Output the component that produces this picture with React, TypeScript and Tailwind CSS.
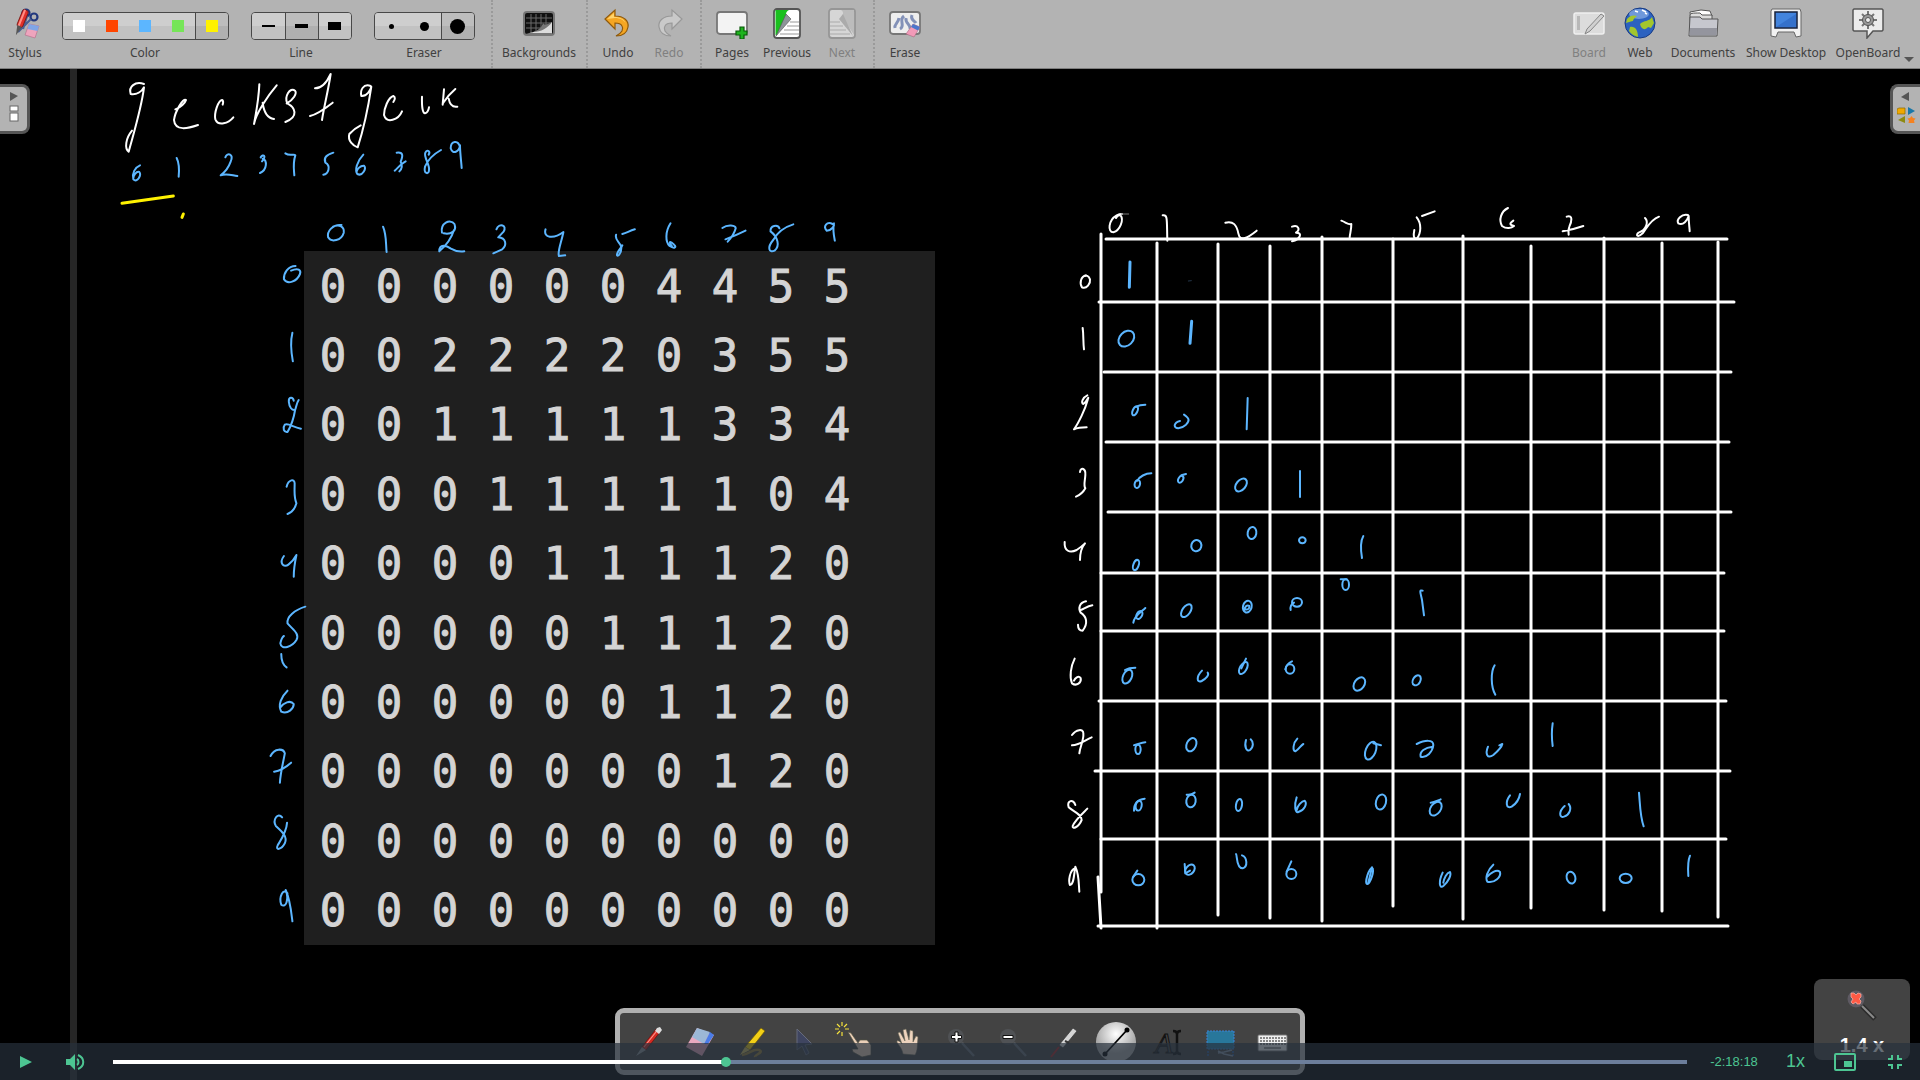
import React from "react";

const BLUE = "#5cb6ff";

type Ring = [number, number, number, number, number?];

function Ink({ x, y, w, h, vw, vh, color, width = 2, d = [], rings = [] }: {
  x: number; y: number; w: number; h: number; vw: number; vh: number;
  color: string; width?: number; d?: string[]; rings?: Ring[];
}) {
  return (
    <svg x={x} y={y} width={w} height={h} viewBox={`0 0 ${vw} ${vh}`} preserveAspectRatio="none"
      overflow="visible" fill="none" stroke={color} strokeWidth={width} strokeLinecap="round" strokeLinejoin="round">
      {d.map((p, i) => <path key={i} d={p} vectorEffect="non-scaling-stroke" />)}
      {rings.map(([cx, cy, rx, ry, r = 0], i) => (
        <ellipse key={i} cx={cx} cy={cy} rx={rx} ry={ry} transform={`rotate(${r} ${cx} ${cy})`} vectorEffect="non-scaling-stroke" />
      ))}
    </svg>
  );
}

const gridLines = [
  [1101, 234, 1101, 892], [1098, 877, 1101, 928], [1157, 243, 1157, 928], [1218, 244, 1218, 915],
  [1270, 246, 1270, 918], [1322, 237, 1322, 921], [1393, 239, 1393, 906], [1463, 236, 1463, 919],
  [1531, 246, 1531, 908], [1604, 238, 1604, 910], [1662, 243, 1662, 911], [1718, 242, 1718, 917],
  [1106, 239, 1727, 239], [1099, 302, 1734, 302], [1104, 372, 1731, 372], [1106, 442, 1729, 442],
  [1108, 512, 1731, 512], [1101, 573, 1724, 573], [1101, 631, 1724, 631], [1099, 701, 1726, 701],
  [1095, 771, 1730, 771], [1101, 839, 1726, 839], [1098, 926, 1728, 926],
];

function Drawing() {
  const title = { x: 60, y: 70, w: 440, h: 190, vw: 1320, vh: 570 };
  const tl = { x: 250, y: 210, w: 700, h: 380, vw: 1568, vh: 1140, color: BLUE };
  const bl = { ...tl, y: 580 };
  const gA = { x: 1050, y: 200, w: 380, h: 370, vw: 1140, vh: 1110 };
  const gB = { x: 1400, y: 200, w: 360, h: 370, vw: 1080, vh: 1110 };
  const gC = { x: 1050, y: 560, w: 380, h: 380, vw: 1140, vh: 1140 };
  const gD = { x: 1400, y: 560, w: 360, h: 380, vw: 1080, vh: 1140 };
  return (
    <svg className="absolute left-0 top-0 h-[1011px] w-[1920px]" viewBox="0 69 1920 1011" role="img" aria-label="Whiteboard handwriting">
      <g stroke="#fff" strokeWidth="3" strokeLinecap="round">
        {gridLines.map(([x1, y1, x2, y2], i) => <line key={i} x1={x1} y1={y1} x2={x2} y2={y2} />)}
      </g>
      <Ink {...title} color="#fff" d={[
        "M252 42 C225 33 205 50 212 72 C230 75 245 65 252 52 C245 110 228 165 206 245 C193 235 197 205 216 182",
        "M346 118 C362 112 376 98 378 90 C370 82 345 125 342 150 C345 185 385 175 414 165",
        "M488 104 C490 98 490 92 486 90 C474 92 462 130 466 148 C475 170 505 160 520 142",
        "M598 43 C596 90 588 130 582 162 C588 130 625 75 650 46 M608 98 C612 130 625 145 642 147",
        "M680 100 C700 90 712 70 705 62 C690 50 672 80 682 100 C705 112 718 140 676 156",
        "M765 55 C785 55 800 38 812 12 C805 60 792 110 786 150 M750 138 C775 132 800 112 818 98",
        "M932 48 C910 40 900 60 904 78 C920 80 932 60 934 50 C925 110 910 180 893 232 C880 228 862 212 868 192 C880 178 890 172 902 166",
        "M1000 96 C1006 88 1006 80 1000 78 C985 82 972 115 972 135 C980 162 1015 150 1026 124",
        "M1086 80 C1085 110 1088 130 1095 130 C1103 128 1106 118 1107 112",
        "M1152 58 L1148 104 M1186 57 C1165 75 1154 92 1150 98 M1166 86 C1170 108 1180 112 1192 110",
      ]} />
      <Ink {...title} color={BLUE} d={[
        "M240 286 C225 292 215 310 220 328 C232 340 245 315 238 306 C228 303 220 318 220 325",
        "M350 264 C358 280 358 300 356 320",
        "M496 262 C502 246 522 252 512 275 C505 295 490 310 482 316 C500 310 515 316 532 318",
        "M602 262 C610 250 620 258 606 274 M608 266 C622 270 622 300 600 309",
        "M676 250 C690 260 702 250 706 256 C698 280 702 300 703 316",
        "M820 248 C800 255 790 262 796 278 C814 288 805 312 790 314",
        "M910 254 C890 275 884 300 892 312 C908 320 920 295 912 287 C900 286 892 298 890 304",
        "M1010 248 C1032 245 1028 260 1022 275 C1030 290 1022 300 1018 304 M1004 302 C1015 292 1025 280 1037 274",
        "M1143 240 C1125 250 1105 265 1095 290 C1090 312 1107 315 1107 300 C1110 285 1090 260 1096 248 C1102 236 1112 245 1106 254",
        "M1200 232 C1195 208 1172 212 1172 235 C1178 255 1198 245 1200 226 C1200 250 1204 275 1205 294",
      ]} />
      <Ink {...title} color="#fff200" width={3} d={["M186 400 L340 378", "M370 432 L366 442"]} />

      <Ink {...tl} d={[
        "M205 45 C185 42 172 65 175 82 C182 98 205 92 210 68 C212 50 200 42 186 50",
        "M298 50 C306 75 304 100 306 126",
        "M430 68 C426 40 448 25 458 42 C464 64 450 74 434 70 M457 60 C450 90 438 108 424 124 C424 100 440 106 450 116 C460 124 470 126 480 124",
        "M552 58 C558 38 577 45 568 65 L556 82 C574 84 576 105 565 118 L545 130",
        "M662 58 C656 84 680 88 702 66 C698 95 688 125 692 138 L706 136",
        "M862 58 C850 62 845 68 834 72 M820 74 C816 92 830 96 832 112 C832 132 822 144 822 134 C822 125 832 112 834 106",
        "M942 40 C930 65 930 95 940 108 C950 117 957 112 950 104 C942 93 936 92 945 108",
        "M1058 54 C1070 42 1088 45 1088 55 C1085 70 1075 88 1070 95 M1065 88 C1085 78 1098 70 1110 62",
        "M1217 43 C1195 52 1180 70 1172 90 C1158 112 1162 130 1175 122 C1188 108 1182 80 1166 64 C1165 46 1182 42 1186 55",
        "M1305 42 C1292 33 1283 50 1292 62 C1302 62 1310 48 1308 40 C1305 60 1308 78 1310 92",
        "M102 168 C85 168 75 190 76 208 C84 225 105 215 112 192 C115 180 108 172 92 182",
        "M95 368 C90 395 92 425 96 454",
        "M98 572 C96 560 86 560 87 576 C88 592 94 602 101 600 C104 590 104 580 109 570 M101 600 C98 625 92 648 84 666 C76 668 72 655 78 644 C86 638 96 652 114 656",
        "M82 830 C86 808 100 805 100 820 C100 850 98 860 104 880 C100 900 92 908 84 912",
        "M76 1038 C64 1060 76 1074 86 1064 C95 1055 100 1045 104 1035 C100 1060 98 1080 98 1100",
      ]} />
      <Ink {...bl} d={[
        "M124 80 C100 90 82 110 84 130 C95 148 112 160 104 180 C95 200 70 212 68 190 C70 178 73 170 76 168",
        "M70 222 C70 240 74 255 82 262",
        "M84 332 C70 350 62 375 70 395 C85 404 98 385 98 372 C90 358 75 370 68 382",
        "M46 528 C55 503 75 505 78 520 C74 550 68 580 67 608 M54 575 C70 572 82 560 92 548",
        "M72 712 C62 695 50 720 58 738 C72 755 85 770 78 790 C70 810 56 812 62 796 C70 778 82 755 83 728",
        "M84 940 C75 922 64 950 70 974 C80 985 88 960 80 930 C90 960 92 990 95 1024",
      ]} />

      <Ink {...gA} color="#fff" d={[
        "M216 42 C212 42 206 43 200 46 C175 60 172 97 190 97 C210 92 222 60 212 46 C206 44 200 50 198 54",
        "M338 46 C354 42 350 60 352 122",
        "M526 68 C550 62 560 75 565 100 C570 128 595 112 620 92",
        "M726 80 C745 74 752 88 738 98 C760 98 750 118 726 124",
        "M874 62 C890 68 895 75 904 72 C904 90 900 100 899 112",
        "M108 226 C92 230 88 250 96 262 C110 268 122 250 120 238 C116 226 108 226 104 228",
        "M98 384 C101 405 99 425 102 448",
        "M112 586 C98 592 92 610 100 612 C112 605 118 582 113 600 C105 630 85 670 72 688 C85 682 95 682 110 682",
        "M90 816 C92 800 108 805 106 825 C105 845 100 855 106 865 C98 880 90 885 78 890",
        "M44 1026 C42 1054 60 1060 80 1050 C92 1042 100 1035 105 1030 C92 1045 90 1060 90 1080",
      ]} />
      <Ink {...gA} color="#777" width={1} d={["M214 42 L236 42"]} />
      <Ink {...gB} color="#fff" d={[
        "M104 34 L66 48 M50 52 C65 70 64 100 50 117 C40 117 40 105 43 90",
        "M324 24 C302 35 296 60 306 78 C320 88 335 84 342 78 C328 74 328 70 340 62",
        "M500 50 C520 44 515 65 508 80 C504 88 505 95 506 104 M488 94 C510 90 530 85 550 78",
        "M777 50 C750 60 740 85 728 100 C712 115 706 104 716 98 C740 90 746 65 735 54",
        "M864 45 C845 40 828 60 835 70 C850 78 862 60 866 48 C866 70 869 85 869 94",
      ]} />
      <Ink {...gC} color="#fff" d={[
        "M127 136 C112 138 100 148 92 150 M108 124 C88 128 84 145 92 158 C110 170 115 190 98 212 C88 212 84 204 84 194",
        "M74 296 C62 320 58 350 66 370 C80 380 95 368 92 354 C85 345 75 355 72 362",
        "M66 525 C78 508 100 505 100 520 C102 540 90 560 88 580 M66 556 C90 554 105 540 125 532",
        "M76 735 C70 715 50 722 56 742 C70 755 95 762 95 780 C85 804 66 808 68 798 C75 780 98 760 112 746",
        "M76 925 C58 930 55 965 60 975 C72 975 72 940 76 920 C88 945 86 975 88 995",
      ]} />
      <Ink {...gA} color={BLUE} width={3} d={["M240 186 L238 262", "M425 364 L420 430"]} />
      <Ink {...gA} color={BLUE} d={[
        "M593 594 L590 688", "M750 813 L750 891",
        "M940 1008 C930 1025 932 1050 936 1074",
        "M286 614 C272 614 262 618 258 620", "M304 820 C286 820 268 830 262 842",
        "M402 644 C418 655 420 662 408 674 C392 688 374 688 374 676 C376 668 384 664 390 663",
        "M394 826 L408 822",
      ]} rings={[
        [229, 416, 20, 27, 45], [255, 633, 7, 14, 25], [262, 852, 8, 12, 15], [392, 838, 7, 11, 30],
        [573, 855, 14, 22, 40], [439, 1037, 15, 17, 15], [606, 999, 13, 18, 10], [757, 1021, 10, 9, 0],
        [258, 1095, 8, 16, 20],
      ]} />
      <Ink {...gA} color="#24364a" width={1} d={["M415 243 L424 242"]} />
      <Ink {...gC} color={BLUE} d={[
        "M250 188 C252 168 275 155 286 144", "M722 150 C720 140 725 132 732 128", "M872 58 L890 58",
        "M1118 92 C1106 88 1112 100 1116 120 L1122 166", "M225 330 C235 324 245 323 256 323",
        "M456 332 C438 350 440 370 455 363 C470 355 478 345 473 338", "M588 296 L574 325", "M726 304 C716 308 708 318 706 328",
        "M252 556 C262 554 275 547 286 547", "M588 540 C582 560 590 577 600 570 C612 560 610 545 602 538",
        "M742 536 C728 550 728 572 736 574 C748 568 752 556 760 552", "M970 550 L993 556",
        "M252 752 C252 730 265 718 284 716", "M410 704 C420 706 428 702 434 698",
        "M740 712 C732 735 735 760 745 756 C765 750 772 730 764 722 C755 722 742 738 740 750",
        "M262 932 L250 950", "M404 912 L406 940 L420 932",
        "M558 882 C562 885 558 925 578 925 C594 920 592 892 576 886", "M724 904 L710 935", "M966 922 L955 968",
        "M584 150 C584 140 590 134 598 138 C600 144 594 150 588 148",
      ]} rings={[
        [268, 165, 8, 13, 30], [409, 152, 12, 22, 35], [592, 140, 13, 18, 15],
        [741, 127, 15, 13, 0], [887, 74, 10, 16, 0], [232, 350, 13, 22, 25], [580, 324, 10, 20, 30], [720, 327, 13, 14, 0],
        [928, 372, 15, 22, 35], [1100, 361, 11, 16, 30], [264, 568, 8, 14, 0], [424, 554, 14, 21, 25],
        [962, 572, 15, 28, 22], [266, 737, 9, 15, 10], [423, 723, 14, 19, 10], [567, 735, 9, 18, 10],
        [993, 726, 15, 23, 15], [265, 959, 18, 17, 0], [420, 929, 12, 17, 40], [724, 942, 15, 15, 0], [959, 948, 7, 25, 18],
      ]} />
      <Ink {...gD} color={BLUE} d={[
        "M284 316 C272 335 272 380 286 404",
        "M50 552 C75 540 100 538 100 555 C98 575 80 595 62 590 C58 575 75 562 98 560",
        "M264 560 C255 582 262 598 280 585 C295 572 305 562 307 552 L298 556",
        "M458 490 C455 510 455 535 458 558",
        "M92 728 C102 728 112 722 122 718",
        "M330 706 C315 725 318 748 335 740 C350 730 358 715 360 702",
        "M494 738 C475 755 478 775 492 770 C508 765 517 745 506 732",
        "M717 698 C720 730 720 770 731 799",
        "M128 938 C115 965 118 988 130 978 C145 965 155 945 150 936 C140 938 132 955 130 968",
        "M280 914 C262 930 255 955 262 965 C285 970 304 950 300 936 C290 926 270 940 262 950",
        "M870 887 C862 905 864 930 865 948",
      ]} rings={[[107, 746, 15, 23, 35], [513, 953, 13, 18, -15], [677, 955, 18, 14, 0]]} />
    </svg>
  );
}

const matrix = [
  "0000004455", "0022220355", "0011111334", "0001111104", "0000111120",
  "0000011120", "0000001120", "0000000120", "0000000000", "0000000000",
];

const Svg = ({ children }: { children: React.ReactNode }) => (
  <svg className="size-8" viewBox="0 0 32 32" aria-hidden="true">{children}</svg>
);

const StylusIcon = () => (
  <Svg>
    <g fill="none" stroke="#22387e" strokeWidth="2.200">
      <circle cx="17" cy="6" r="3.500" /><circle cx="25" cy="10" r="3.500" />
      <path d="M18 9 L14 22 M22 12 L9 25" stroke="#4b5f93" />
    </g>
    <g transform="rotate(22 14 16)">
      <rect x="9" y="3" width="6" height="18" rx="2" fill="#e0302a" stroke="#7a1511" strokeWidth=".8" />
      <rect x="10" y="3" width="2" height="18" fill="#ff8d85" />
      <path d="M9.500 20 L14.500 20 L12 30 Z" fill="#555" />
    </g>
    <path d="M20 17 L30 19 L26 31 L16 28 Z" fill="#eea4bd" stroke="#b06a86" strokeWidth=".6" />
    <path d="M20 17 L30 19 L28.500 24 L18.500 22 Z" fill="#7fa5e6" />
  </Svg>
);
const BackgroundsIcon = () => (
  <Svg>
    <rect x="1" y="5" width="30" height="23" rx="3" fill="#111" stroke="#777" strokeWidth="2" />
    <path d="M3 11H29M3 16H29M3 21H25M8 7V26M13 7V26M18 7V24M23 7V20" stroke="#6a6a6a" />
    <path d="M3 26.500 C12 25 20 23 29 15 V26.500 Z" fill="#ddd" />
    <path d="M10 25 C17 23 19 19 20 16 C22 19 25 17 29 15 C25 21 18 25 10 25Z" fill="#777" />
  </Svg>
);
const UndoIcon = () => (
  <Svg><path d="M13 3 V9 C22 9 27 14 26 20 C25 26 21 29 14 29 C20 26 22 22 20 19 C19 17 17 16 13 16 V22 L3 12 Z" fill="#f5a623" stroke="#8f5a0c" strokeWidth="1.200" /><path d="M12 6 L5 12 L13 11 C18 11 22 13 24 17 C22 12 19 10 12 10Z" fill="#ffd36b" /></Svg>
);
const RedoIcon = () => (
  <Svg><path d="M19 3 V9 C10 9 5 14 6 20 C7 26 11 29 18 29 C12 26 10 22 12 19 C13 17 15 16 19 16 V22 L29 12 Z" fill="#c9c9c9" stroke="#989898" strokeWidth="1.200" /></Svg>
);
const PagesIcon = () => (
  <Svg>
    <rect x="1" y="5" width="30" height="22" rx="3" fill="#f3f3f3" stroke="#777" strokeWidth="1.800" />
    <path d="M24 20h4v4h3v4h-3v4h-4v-4h-4v-4h4z" fill="#1eb31e" stroke="#0b5a0b" strokeWidth="1.200" />
  </Svg>
);
const PreviousIcon = () => (
  <Svg>
    <rect x="3" y="2" width="26" height="29" rx="3" fill="#fff" stroke="#555" strokeWidth="1.800" />
    <path d="M4.500 3 H18 C14 5 15 8 16 9 L6 28 H4.500 Z" fill="#19c01e" />
    <path d="M15 7 L20 12 L5 29 Z" fill="#8d9499" stroke="#555" strokeWidth=".6" />
    <path d="M19 15H28M16 19H28M13 23H28M9 27H28" stroke="#999" />
  </Svg>
);
const NextIcon = () => (
  <Svg>
    <rect x="3" y="2" width="26" height="29" rx="3" fill="#d6d6d6" stroke="#969696" strokeWidth="1.800" />
    <path d="M15 3 H28 V28 L16 9 C18 7 17 4 15 3 Z" fill="#bcbcbc" />
    <path d="M17 7 L13 12 L27 29 Z" fill="#ababab" />
    <path d="M4 15H14M4 19H17M4 23H20M4 27H24" stroke="#aaa" />
  </Svg>
);
const EraseIcon = () => (
  <Svg>
    <rect x="1" y="5" width="30" height="22" rx="3" fill="#eee" stroke="#777" strokeWidth="1.800" />
    <path d="M6 21 C5 17 9 17 10 11 M11 22 C17 19 9 13 15 9 M17 11 C16 17 22 17 21 22 M23 8 C21 13 26 14 27 16" fill="none" stroke="#8391b8" strokeWidth="3" />
    <path d="M24 17 L31 20 L25 30 L17 27 Z" fill="#f29ab8" stroke="#a56a80" strokeWidth=".6" />
    <path d="M24 17 L31 20 L29 23.500 L22 20 Z" fill="#4b76cc" />
  </Svg>
);
const BoardIcon = () => (
  <Svg>
    <rect x="1" y="6" width="30" height="21" rx="2" fill="#dcdcdc" stroke="#f0f0f0" strokeWidth="1.500" />
    <rect x="4" y="9" width="3" height="14" fill="#b8b8b8" />
    <path d="M28 7 L31 9 L17 24 L12 27 L14 22 Z" fill="#d0d0d0" stroke="#868686" />
  </Svg>
);
const WebIcon = () => (
  <Svg>
    <circle cx="16" cy="16" r="15" fill="#2c62c0" stroke="#173a83" />
    <ellipse cx="15" cy="7" rx="10" ry="5" fill="#9dbdec" opacity=".6" />
    <path d="M3 12 C6 8 10 8 13 9 C11 11 9 12 9 14 C6 15 4 15 2 16 Z M16 17 C20 13 25 15 28 10 L30 16 L27 21 L24 20 C21 24 17 22 16 17 Z M6 20 C11 19 14 23 14 30 C10 29 7 27 5 24 Z" fill="#a3c62c" />
    <path d="M11 4l3 1M18 3l4 2M21 6l2 1" stroke="#fff" strokeWidth="1.500" />
  </Svg>
);
const DocumentsIcon = () => (
  <Svg>
    <path d="M3 5 L14 3 L23 4 L25 9 L5 25 Z" fill="#fff" stroke="#555" />
    <path d="M3 9 C3 6 5 6 13 6 L15 8 H25 V24 H3 Z" fill="#ddd" stroke="#555" />
    <path d="M3 10 H13 L15 12 H31 L30 29 H2 Z" fill="#c6c7ce" stroke="#555" />
    <path d="M3 21 H30 L29.500 28 H2.500 Z" fill="#94959e" />
  </Svg>
);
const DesktopIcon = () => (
  <Svg>
    <path d="M2 2 H30 L31 5 V29 L26 30 L24 25 H8 L6 30 L1 29 V4 Z" fill="#f2f2f2" stroke="#666" />
    <rect x="5" y="5" width="22" height="16" fill="#4384dd" stroke="#17213a" strokeWidth="1.500" />
    <path d="M6 20 L26 7 V20 Z" fill="#3571cb" />
  </Svg>
);
const OpenBoardIcon = () => (
  <Svg>
    <path d="M2 2 H30 L31 3 V23 L30 24 H21 L15 31 V24 H2 L1 23 V3 Z" fill="#ececec" stroke="#555" strokeWidth="1.500" />
    <g stroke="#777" strokeWidth="2"><path d="M16 4V22M7 13H25M10 7L22 19M22 7L10 19" /></g>
    <circle cx="16" cy="13" r="5.500" fill="#999" stroke="#555" /><circle cx="16" cy="13" r="2.500" fill="#eee" stroke="#555" />
  </Svg>
);

function Tool({ label, icon, w, disabled }: { label: string; icon: React.ReactNode; w: string; disabled?: boolean }) {
  return (
    <button type="button" disabled={disabled} className={`flex shrink-0 flex-col items-center gap-1.5 pt-[7px] ${w} ${disabled ? "text-[#808080]" : "text-[#404040]"}`}>
      {icon}
      <span className="whitespace-nowrap leading-4">{label}</span>
    </button>
  );
}

function Group({ label, w, options }: { label: string; w: string; options: { name: string; on?: boolean; mark: React.ReactNode; sep?: boolean }[] }) {
  return (
    <div role="group" aria-label={label} className={`flex shrink-0 flex-col items-center gap-[5px] pt-3 text-[#404040] ${w}`}>
      <div className="flex overflow-hidden rounded-[4px] border border-[#484848]">
        {options.map((o) => (
          <button key={o.name} type="button" aria-label={o.name} aria-pressed={!!o.on}
            className={`flex h-[26px] w-[33px] items-center justify-center ${o.sep ? "border-l border-[#484848]" : ""} ${o.on ? "bg-linear-to-b from-[#bdbdbd] from-50% to-[#b0b0b0] to-50%" : "bg-linear-to-b from-[#cecece] from-50% to-[#c2c2c2] to-50%"}`}>
            {o.mark}
          </button>
        ))}
      </div>
      <span className="leading-4">{label}</span>
    </div>
  );
}

const Sep = ({ w }: { w: string }) => (
  <div className={`flex shrink-0 justify-center ${w}`}><div className="border-l-2 border-dotted border-[#9a9a9a]" /></div>
);

function Toolbar() {
  return (
    <header className="flex h-[69px] shrink-0 border-b border-[#7d7d7d] bg-[#b3b3b3] text-[12px]">
      <Tool label="Stylus" icon={<StylusIcon />} w="w-[50px]" />
      <Group label="Color" w="w-[190px]" options={[
        { name: "White", mark: <span className="size-3 bg-white" /> },
        { name: "Orange", mark: <span className="size-3 bg-[#ff4500]" /> },
        { name: "Blue", mark: <span className="size-3 bg-[#5cb6ff]" /> },
        { name: "Green", mark: <span className="size-3 bg-[#76e558]" /> },
        { name: "Yellow", on: true, sep: true, mark: <span className="size-3 bg-[#fff200]" /> },
      ]} />
      <Group label="Line" w="w-[122px]" options={[
        { name: "Thin line", mark: <span className="h-0.5 w-[13px] bg-black" /> },
        { name: "Medium line", on: true, sep: true, mark: <span className="h-1 w-[13px] bg-black" /> },
        { name: "Thick line", sep: true, mark: <span className="h-2 w-[13px] bg-black" /> },
      ]} />
      <Group label="Eraser" w="w-[124px]" options={[
        { name: "Small eraser", mark: <span className="size-[5px] rounded-full bg-black" /> },
        { name: "Medium eraser", mark: <span className="size-[9px] rounded-full bg-black" /> },
        { name: "Large eraser", on: true, sep: true, mark: <span className="size-[15px] rounded-full bg-black" /> },
      ]} />
      <Sep w="w-3" />
      <Tool label="Backgrounds" icon={<BackgroundsIcon />} w="w-[82px]" />
      <Sep w="w-3.5" />
      <Tool label="Undo" icon={<UndoIcon />} w="w-12" />
      <Tool label="Redo" icon={<RedoIcon />} w="w-[54px]" disabled />
      <Sep w="w-2.5" />
      <Tool label="Pages" icon={<PagesIcon />} w="w-[52px]" />
      <Tool label="Previous" icon={<PreviousIcon />} w="w-[58px]" />
      <Tool label="Next" icon={<NextIcon />} w="w-[52px]" disabled />
      <Sep w="w-3" />
      <Tool label="Erase" icon={<EraseIcon />} w="w-[50px]" />
      <div className="grow" />
      <Tool label="Board" icon={<BoardIcon />} w="w-[50px]" disabled />
      <Tool label="Web" icon={<WebIcon />} w="w-[52px]" />
      <Tool label="Documents" icon={<DocumentsIcon />} w="w-[74px]" />
      <Tool label="Show Desktop" icon={<DesktopIcon />} w="w-[92px]" />
      <Tool label="OpenBoard" icon={<OpenBoardIcon />} w="w-[72px]" />
      <button type="button" aria-label="More" className="flex w-4 items-end pb-1.5">
        <svg className="h-[5px] w-[10px]" viewBox="0 0 10 5"><path d="M0 0H10L5 5Z" fill="#555" /></svg>
      </button>
    </header>
  );
}

const paletteTools: [string, React.ReactNode][] = [
  ["Pen", <><path d="M24 3 L28 6 L14 24 L10 21 Z" fill="#d42a22" stroke="#5d1411" strokeWidth=".7" /><path d="M23 5 L25 2 L28 1 L30 4 L27 8Z" fill="#ddd" /><path d="M24 6 L12 21" stroke="#ff958d" strokeWidth="1.200" /><path d="M10 21 L14 24 L4 30 Z" fill="#8d9498" /></>],
  ["Eraser", <><path d="M13 2 L30 9 L18 30 L2 21 Z" fill="#eaa9c0" /><path d="M13 2 L26 6 L20 18 L8 11 Z" fill="#9cb8d6" /><path d="M26 6 L30 9 L24 18 L20 18Z" fill="#4b7de8" /></>],
  ["Highlighter", <><path d="M25 2 L29 5 L14 24 L9 21 Z" fill="#f2cf16" stroke="#6e5a06" strokeWidth=".7" /><path d="M9 21 L14 24 L4 29 Z" fill="#c8b45a" /><path d="M6 29 C14 28 17 22 23 24 C29 26 18 29 19 31" fill="none" stroke="#9b8136" strokeWidth="2.500" /></>],
  ["Selector", <path d="M9 3 V24 L14 20 L18 29 L21 27 L17 19 L24 18 Z" fill="#3f4560" stroke="#666b7c" />],
  ["Interact", <><path d="M8 6 L11 7 L18 17 L20 14 L27 14 L31 19 V29 L22 31 L13 26 L12 23 L18 23 Z" fill="#ecd0b8" stroke="#554" strokeWidth=".7" /><path d="M2 -4V0M2 6V10M-5 3H-1M5 3H9M-3 -2L0 1M7 -2L4 1M-3 8L0 5" stroke="#f5e23c" strokeWidth="1.200" /></>],
  ["Scroll", <><path d="M11 28 C10 21 4 17 5 15 C7 14 9 17 10 18 L6 7 L8 6 L13 15 L11 4 L14 3 L17 14 L18 4 L21 5 L21 16 L24 10 L26 11 C25 20 26 24 23 29 Z" fill="#eed3bd" stroke="#665" strokeWidth=".6" /></>],
  ["Zoom in", <><circle cx="12" cy="11" r="8" fill="#55595d" opacity=".7" /><path d="M18 17 L30 30" stroke="#6a7078" strokeWidth="2.500" /><path d="M11 6h3v3.500h3.500v3h-3.500v3.500h-3v-3.500h-3.500v-3h3.500z" fill="#fff" stroke="#111" /></>],
  ["Zoom out", <><circle cx="12" cy="11" r="8" fill="#55595d" opacity=".7" /><path d="M18 17 L30 30" stroke="#6a7078" strokeWidth="2.500" /><path d="M7 9.500h10v3h-10z" fill="#fff" stroke="#111" /></>],
  ["Laser pointer", <><path d="M25 2 L29 5 L15 22 L11 19 Z" fill="#d5d5d5" stroke="#333" strokeWidth=".7" /><path d="M17 15L21 17" stroke="#333" strokeWidth="2" /><path d="M11 21 L3 31" stroke="#a92527" strokeWidth="2" /></>],
  ["Line", <><circle cx="16" cy="16" r="20" fill="url(#ball)" /><path d="M5 28 L27 4" stroke="#000" strokeWidth="1.800" /><circle cx="5" cy="28" r="2.500" /><circle cx="27" cy="4" r="2.500" /></>],
  ["Text", <><text x="3" y="27" fontSize="29" fontStyle="italic" fontFamily="Liberation Serif, serif" fill="#444" stroke="#111" strokeWidth="1">A</text><path d="M21 5 C24 5 25 6 25 8 C25 6 27 5 29 5 M25 7V26 M21 28 C24 28 25 27 25 25 C25 27 27 28 29 28" fill="none" stroke="#111" strokeWidth="2.500" /></>],
  ["Capture", <><rect x="3" y="5" width="27" height="18" fill="#28779b" stroke="#3c84d8" strokeDasharray="2 1" /><path d="M4 25V31M29 25V31" stroke="#2b67b5" strokeWidth="1.500" strokeDasharray="2 1" /><path d="M14 27 L20 26 L28 24 M14 25 L20 28 L29 30" stroke="#8494a8" strokeWidth="1.500" fill="none" /></>],
  ["Keyboard", <><rect x="2" y="9" width="29" height="16" rx="1" fill="#f0f0f0" stroke="#777" /><path d="M4 12H30M4 15H30M4 18H30" stroke="#666" strokeWidth="1.500" strokeDasharray="2 1" /><path d="M8 22H25" stroke="#999" strokeWidth="2" /></>],
];

function Palette() {
  return (
    <nav aria-label="Board tools" className="absolute bottom-[5px] left-1/2 flex h-[67px] -translate-x-1/2 items-center rounded-[9px] border-[5px] border-[#b0b0b0] bg-[#434343] px-0.5">
      {paletteTools.map(([name, art]) => (
        <button key={name} type="button" aria-label={name} className="flex w-[52px] justify-center">
          <svg className="size-8 overflow-visible" viewBox="0 0 32 32">
            <defs><radialGradient id="ball" cx=".5" cy=".3"><stop offset="0" stopColor="#fff" /><stop offset="1" stopColor="#aaa" /></radialGradient></defs>
            {art}
          </svg>
        </button>
      ))}
    </nav>
  );
}

function PlayerBar() {
  return (
    <div className="absolute inset-x-0 bottom-0 flex h-[37px] items-center bg-[rgba(39,49,60,0.7)] text-[#4dc592]">
      <button type="button" aria-label="Play" className="flex w-[52px] justify-center">
        <svg className="size-3" viewBox="0 0 12 12"><path d="M0 0L12 6L0 12Z" fill="currentColor" /></svg>
      </button>
      <button type="button" aria-label="Mute" className="flex w-[46px] justify-center">
        <svg className="size-5" viewBox="0 0 20 20" fill="none" stroke="currentColor" strokeWidth="2"><path d="M1 7H5L10 2V18L5 13H1Z" fill="currentColor" stroke="none" /><path d="M12 7C14 8 14 12 12 13M13 3C20 6 20 14 13 17" /></svg>
      </button>
      <input type="range" aria-label="Seek" min={0} max={1000} defaultValue={389}
        className="ml-[15px] h-2.5 min-w-0 grow appearance-none bg-transparent [&::-webkit-slider-runnable-track]:h-1 [&::-webkit-slider-runnable-track]:bg-[linear-gradient(to_right,#ffffff_39%,#6c7e9b_39%)] [&::-webkit-slider-thumb]:-mt-[3px] [&::-webkit-slider-thumb]:size-2.5 [&::-webkit-slider-thumb]:appearance-none [&::-webkit-slider-thumb]:rounded-full [&::-webkit-slider-thumb]:bg-[#4dc592]" />
      <span className="w-[94px] text-center text-[13px]">-2:18:18</span>
      <button type="button" aria-label="Playback speed" className="w-[29px] text-center text-[18px]">1x</button>
      <button type="button" aria-label="Picture in picture" className="ml-6">
        <svg className="h-[18px] w-[22px]" viewBox="0 0 22 18"><rect x="1" y="1" width="20" height="16" rx="1" fill="none" stroke="currentColor" strokeWidth="2" /><rect x="10" y="8" width="8" height="6" fill="currentColor" /></svg>
      </button>
      <button type="button" aria-label="Exit full screen" className="mr-[18px] ml-8">
        <svg className="size-3.5" viewBox="0 0 14 14" fill="none" stroke="currentColor" strokeWidth="2"><path d="M0 4H4V0M10 0V4H14M0 10H4V14M10 14V10H14" /></svg>
      </button>
    </div>
  );
}

export default function App() {
  return (
    <div className="flex h-screen flex-col overflow-hidden bg-black font-['Noto_Sans',sans-serif]">
      <Toolbar />
      <main className="relative grow overflow-hidden bg-black">
        <div className="ml-[70px] h-full w-[7px] bg-[#262626]" />
        <table className="absolute left-[304px] top-[182px] h-[694px] w-[631px] table-fixed border-collapse bg-[#1f1f1f] font-['DejaVu_Sans_Mono',monospace] text-[44px] leading-none text-[#d4d4d4] [-webkit-text-stroke:1px_#d4d4d4]">
          <tbody>
            {matrix.map((row, r) => (
              <tr key={r}>
                {row.split("").map((n, c) => <td key={c} className="w-14 p-0 pl-0.5 pt-0.5 text-center">{n}</td>)}
                <td />
              </tr>
            ))}
          </tbody>
        </table>
        <Drawing />
        <button type="button" aria-label="Open page list" className="absolute left-0 top-[15px] flex h-[50px] w-[30px] flex-col items-center gap-1 rounded-r-[8px] border-[3px] border-l-0 border-[#555] bg-[#b3b3b3] pt-[5px]">
          <svg className="h-[32px] w-[12px]" viewBox="0 0 12 32"><path d="M2 0L10 4L2 9Z" fill="#555" /><rect x="2" y="14" width="8" height="5" fill="#fff" stroke="#666" /><rect x="2" y="21" width="8" height="8" fill="#fff" stroke="#666" /></svg>
        </button>
        <button type="button" aria-label="Open library" className="absolute right-0 top-[15px] flex h-[50px] w-[30px] flex-col items-center rounded-l-[8px] border-[3px] border-r-0 border-[#555] bg-[#b3b3b3] pt-[5px]">
          <svg className="h-8 w-5" viewBox="0 0 20 32"><path d="M12 0V9L4 5Z" fill="#555" /><path d="M0 17l2-1h6v6H0z" fill="#f0a800" stroke="#8a6a00" strokeWidth=".7" /><path d="M11 15L18 19L11 23Z" fill="#1877a8" /><path d="M8 24V31L1 28Z" fill="#8d8a10" /><path d="M14.500 24l1.500 2 2.500.5-1.500 2 .5 2.500h-6l.5-2.500-1.500-2 2.500-.5z" fill="#f58220" /></svg>
        </button>
        <Palette />
        <div className="absolute bottom-5 right-[10px] flex h-[81px] w-24 flex-col items-center gap-2.5 rounded-[8px] bg-[#434343] pt-2.5 text-white">
          <svg className="size-9" viewBox="0 0 36 36"><circle cx="12" cy="10" r="8.500" fill="#6a6470" opacity=".7" /><path d="M18 17L31 30" stroke="#2b2b2b" strokeWidth="5" /><path d="M18 17L30 29" stroke="#8a8a8a" strokeWidth="2" /><path d="M7 4L10 4L12 6L14 4L17 5L17 8L15 10L17 12L16 15L13 15L12 13L9 15L7 13L9 10L7 8Z" fill="#ff5a45" stroke="#ffb3a8" strokeWidth=".7" /></svg>
          <span className="font-['Liberation_Sans',Arial,sans-serif] text-[20px] font-bold leading-5">1.4 x</span>
        </div>
        <div className="font-['Liberation_Sans',Arial,sans-serif]"><PlayerBar /></div>
      </main>
    </div>
  );
}
